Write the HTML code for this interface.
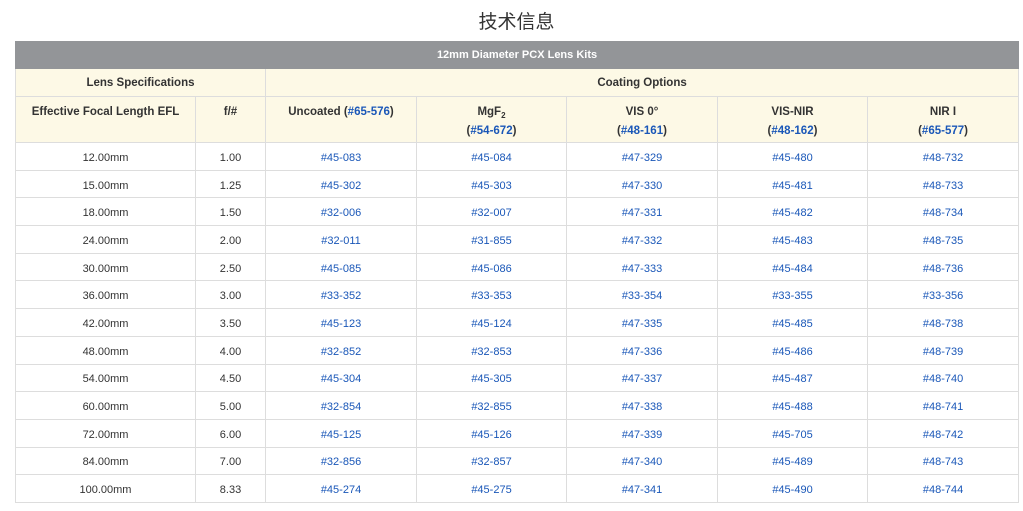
<!DOCTYPE html>
<html><head><meta charset="utf-8"><style>
body{margin:0;background:#fff;width:1023px;height:511px;overflow:hidden;font-family:"Liberation Sans","Noto Sans CJK SC",sans-serif;}
h1{position:absolute;left:0;top:9px;width:1033px;margin:0;text-align:center;font-weight:normal;font-size:19px;color:#333;font-family:"Noto Sans CJK SC",sans-serif;line-height:24px}
table{position:absolute;left:15px;top:41px;border-collapse:collapse;table-layout:fixed;width:1004px;font-size:11px;color:#333}
td,th{border:1px solid #ddd;text-align:center;padding:0}
.t th{background:#939598;color:#fff;height:26px;font-size:11px;font-weight:bold;border-color:#939598}
.h th{background:#fdf9e6;font-weight:bold;font-size:11.5px;color:#333}
.h1 th{height:27px}
.h2 th{height:39px;vertical-align:top;padding-top:6px;line-height:19px}
sub{font-size:8px;vertical-align:baseline;position:relative;top:3px;line-height:0}
tbody td{height:23.7px;padding-top:3px}
a{color:#1a57b8;text-decoration:none}
</style></head><body>
<h1>技术信息</h1>
<table>
<colgroup><col style="width:180px"><col style="width:70px"><col style="width:151px"><col style="width:150px"><col style="width:151px"><col style="width:150px"><col style="width:151px"></colgroup>
<tr class="t"><th colspan="7">12mm Diameter PCX Lens Kits</th></tr>
<tr class="h h1"><th colspan="2">Lens Specifications</th><th colspan="5">Coating Options</th></tr>
<tr class="h h2"><th>Effective Focal Length EFL</th><th>f/#</th><th>Uncoated (<a>#65-576</a>)</th><th>MgF<sub>2</sub><br>(<a>#54-672</a>)</th><th>VIS 0°<br>(<a>#48-161</a>)</th><th>VIS-NIR<br>(<a>#48-162</a>)</th><th>NIR I<br>(<a>#65-577</a>)</th></tr>
<tbody>
<tr><td>12.00mm</td><td>1.00</td><td><a>#45-083</a></td><td><a>#45-084</a></td><td><a>#47-329</a></td><td><a>#45-480</a></td><td><a>#48-732</a></td></tr>
<tr><td>15.00mm</td><td>1.25</td><td><a>#45-302</a></td><td><a>#45-303</a></td><td><a>#47-330</a></td><td><a>#45-481</a></td><td><a>#48-733</a></td></tr>
<tr><td>18.00mm</td><td>1.50</td><td><a>#32-006</a></td><td><a>#32-007</a></td><td><a>#47-331</a></td><td><a>#45-482</a></td><td><a>#48-734</a></td></tr>
<tr><td>24.00mm</td><td>2.00</td><td><a>#32-011</a></td><td><a>#31-855</a></td><td><a>#47-332</a></td><td><a>#45-483</a></td><td><a>#48-735</a></td></tr>
<tr><td>30.00mm</td><td>2.50</td><td><a>#45-085</a></td><td><a>#45-086</a></td><td><a>#47-333</a></td><td><a>#45-484</a></td><td><a>#48-736</a></td></tr>
<tr><td>36.00mm</td><td>3.00</td><td><a>#33-352</a></td><td><a>#33-353</a></td><td><a>#33-354</a></td><td><a>#33-355</a></td><td><a>#33-356</a></td></tr>
<tr><td>42.00mm</td><td>3.50</td><td><a>#45-123</a></td><td><a>#45-124</a></td><td><a>#47-335</a></td><td><a>#45-485</a></td><td><a>#48-738</a></td></tr>
<tr><td>48.00mm</td><td>4.00</td><td><a>#32-852</a></td><td><a>#32-853</a></td><td><a>#47-336</a></td><td><a>#45-486</a></td><td><a>#48-739</a></td></tr>
<tr><td>54.00mm</td><td>4.50</td><td><a>#45-304</a></td><td><a>#45-305</a></td><td><a>#47-337</a></td><td><a>#45-487</a></td><td><a>#48-740</a></td></tr>
<tr><td>60.00mm</td><td>5.00</td><td><a>#32-854</a></td><td><a>#32-855</a></td><td><a>#47-338</a></td><td><a>#45-488</a></td><td><a>#48-741</a></td></tr>
<tr><td>72.00mm</td><td>6.00</td><td><a>#45-125</a></td><td><a>#45-126</a></td><td><a>#47-339</a></td><td><a>#45-705</a></td><td><a>#48-742</a></td></tr>
<tr><td>84.00mm</td><td>7.00</td><td><a>#32-856</a></td><td><a>#32-857</a></td><td><a>#47-340</a></td><td><a>#45-489</a></td><td><a>#48-743</a></td></tr>
<tr><td>100.00mm</td><td>8.33</td><td><a>#45-274</a></td><td><a>#45-275</a></td><td><a>#47-341</a></td><td><a>#45-490</a></td><td><a>#48-744</a></td></tr>
</tbody></table>
</body></html>
